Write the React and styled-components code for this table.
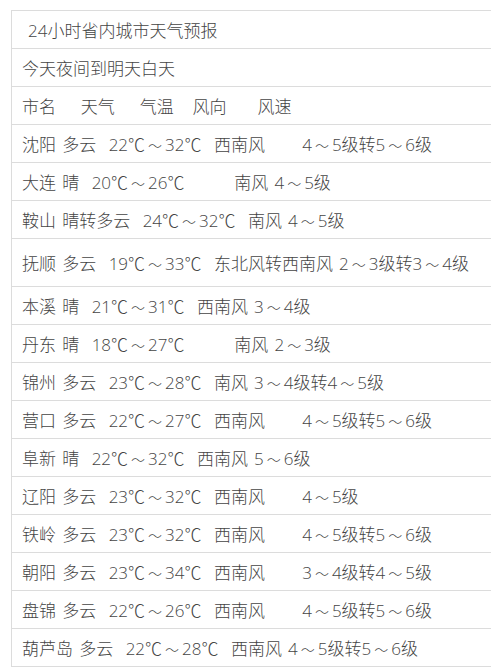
import React from 'react';
import styled, { createGlobalStyle } from 'styled-components';

const GlobalStyle = createGlobalStyle`
  html, body {
    margin: 0;
    padding: 0;
    background: #fff;
  }
  body {
    font-family: "Open Sans", "Noto Sans CJK SC", sans-serif;
  }
`;

const Sheet = styled.div`
  margin: 10px 0 0 11px;
  width: 480px;
  border-top: 1px solid #dcdcdc;
  border-left: 1px solid #dcdcdc;
  border-right: 1px solid #dcdcdc;
`;

const Row = styled.div`
  display: flex;
  align-items: center;
  height: ${({ $tall }) => ($tall ? 47 : 37)}px;
  padding-left: ${({ $indent }) => ($indent ? 16 : 10)}px;
  border-bottom: 1px solid #dcdcdc;
  font-size: 17px;
  font-weight: 300;
  color: #444;
  white-space: pre;
  word-spacing: 1.8px;
`;

const Tilde = styled.span`
  font-size: 14px;
  margin: 0 3px;
  position: relative;
  top: 1px;
`;

const rows = [
  { text: '沈阳 多云  22℃～32℃  西南风      4～5级转5～6级' },
  { text: '大连 晴  20℃～26℃        南风 4～5级' },
  { text: '鞍山 晴转多云  24℃～32℃  南风 4～5级' },
  { text: '抚顺 多云  19℃～33℃  东北风转西南风 2～3级转3～4级', tall: true },
  { text: '本溪 晴  21℃～31℃  西南风 3～4级' },
  { text: '丹东 晴  18℃～27℃        南风 2～3级' },
  { text: '锦州 多云  23℃～28℃  南风 3～4级转4～5级' },
  { text: '营口 多云  22℃～27℃  西南风      4～5级转5～6级' },
  { text: '阜新 晴  22℃～32℃  西南风 5～6级' },
  { text: '辽阳 多云  23℃～32℃  西南风      4～5级' },
  { text: '铁岭 多云  23℃～32℃  西南风      4～5级转5～6级' },
  { text: '朝阳 多云  23℃～34℃  西南风      3～4级转4～5级' },
  { text: '盘锦 多云  22℃～26℃  西南风      4～5级转5～6级' },
  { text: '葫芦岛 多云  22℃～28℃  西南风 4～5级转5～6级' },
];

function withTildes(text) {
  const parts = text.split('～');
  return parts.map((part, i) => (
    <React.Fragment key={i}>
      {i > 0 && <Tilde>～</Tilde>}
      {part}
    </React.Fragment>
  ));
}

export default function App() {
  return (
    <>
      <GlobalStyle />
      <Sheet>
        <Row $indent>24小时省内城市天气预报</Row>
        <Row>今天夜间到明天白天</Row>
        <Row>{'市名    天气    气温   风向     风速'}</Row>
        {rows.map((r) => (
          <Row key={r.text} $tall={r.tall}>
            {withTildes(r.text)}
          </Row>
        ))}
      </Sheet>
    </>
  );
}
